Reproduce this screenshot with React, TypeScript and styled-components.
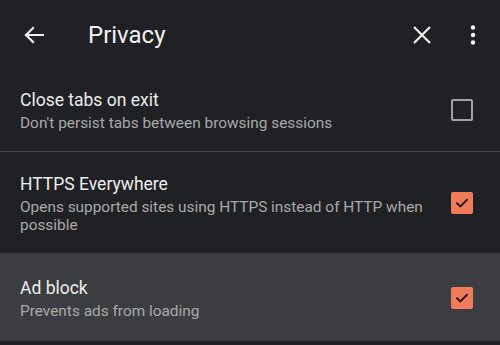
import React from "react";
import styled, { createGlobalStyle } from "styled-components";

const Global = createGlobalStyle`
  html, body { margin: 0; padding: 0; background: #202124; }
  body { font-family: Roboto, "Noto Sans", sans-serif; }
`;

const Screen = styled.div`
  width: 500px;
  height: 345px;
  background: #202124;
  display: flex;
  flex-direction: column;
  overflow: hidden;
`;

const Toolbar = styled.header`
  height: 70px;
  display: flex;
  align-items: center;
  padding: 0 15px 0 22px;
  color: #f1f1f1;
`;

const IconButton = styled.button`
  background: none;
  border: 0;
  padding: 0;
  width: 24px;
  height: 24px;
  display: flex;
  align-items: center;
  justify-content: center;
  color: #f1f1f1;
`;

const Title = styled.h1`
  margin: 0 0 0 42px;
  flex: 1;
  font-size: 24px;
  font-weight: 400;
  color: #f1f1f1;
`;

const Actions = styled.div`
  display: flex;
  align-items: center;
  gap: 27px;
`;

const Row = styled.div<{ $highlight?: boolean; $top: number; $bottom: number; $divider?: boolean }>`
  display: flex;
  align-items: center;
  gap: 20px;
  padding: ${(p) => p.$top}px 27px ${(p) => p.$bottom}px 20px;
  background: ${(p) => (p.$highlight ? "#3c3d41" : "transparent")};
  border-bottom: ${(p) => (p.$divider ? "1px solid #46474a" : "none")};
`;

const Texts = styled.div`
  flex: 1;
  display: flex;
  flex-direction: column;
`;

const RowTitle = styled.div`
  font-size: 17.5px;
  line-height: 24px;
  margin-bottom: 2px;
  color: #ededed;
`;

const RowSub = styled.div`
  font-size: 15.4px;
  line-height: 18px;
  color: #a9a9ab;
`;

const Box = styled.div<{ $checked?: boolean }>`
  width: 22px;
  height: 22px;
  box-sizing: border-box;
  border-radius: 2px;
  border: ${(p) => (p.$checked ? "none" : "2px solid #a3a3a5")};
  background: ${(p) => (p.$checked ? "#f27b5b" : "transparent")};
  display: flex;
  align-items: center;
  justify-content: center;
  flex-shrink: 0;
`;

const Check = () => (
  <svg width="16" height="16" viewBox="0 0 16 16">
    <path d="M3 8.2 L6.4 11.4 L13 4.8" fill="none" stroke="#2b1a16" strokeWidth="2" strokeLinecap="round" strokeLinejoin="round" />
  </svg>
);

const Setting = ({
  title,
  sub,
  checked,
  top,
  bottom,
  highlight,
  divider,
}: {
  title: string;
  sub: string;
  checked?: boolean;
  top: number;
  bottom: number;
  highlight?: boolean;
  divider?: boolean;
}) => (
  <Row $top={top} $bottom={bottom} $highlight={highlight} $divider={divider}>
    <Texts>
      <RowTitle>{title}</RowTitle>
      <RowSub>{sub}</RowSub>
    </Texts>
    <Box $checked={checked}>{checked && <Check />}</Box>
  </Row>
);

export default function App() {
  return (
    <Screen>
      <Global />
      <Toolbar>
        <IconButton aria-label="Back">
          <svg width="24" height="24" viewBox="0 0 24 24">
            <path d="M21 12 H4 M11 5 L4 12 L11 19" fill="none" stroke="#f1f1f1" strokeWidth="2.2" strokeLinecap="square" />
          </svg>
        </IconButton>
        <Title>Privacy</Title>
        <Actions>
          <IconButton aria-label="Close">
            <svg width="24" height="24" viewBox="0 0 24 24">
              <path d="M4 4 L20 20 M20 4 L4 20" fill="none" stroke="#f1f1f1" strokeWidth="2.2" />
            </svg>
          </IconButton>
          <IconButton aria-label="More">
            <svg width="24" height="24" viewBox="0 0 24 24">
              <circle cx="12" cy="4.5" r="2.2" fill="#f1f1f1" />
              <circle cx="12" cy="12" r="2.2" fill="#f1f1f1" />
              <circle cx="12" cy="19.5" r="2.2" fill="#f1f1f1" />
            </svg>
          </IconButton>
        </Actions>
      </Toolbar>
      <Setting
        title="Close tabs on exit"
        sub="Don't persist tabs between browsing sessions"
        top={18}
        bottom={19}
        divider
      />
      <Setting
        title="HTTPS Everywhere"
        sub="Opens supported sites using HTTPS instead of HTTP when possible"
        checked
        top={20}
        bottom={19}
      />
      <Setting
        title="Ad block"
        sub="Prevents ads from loading"
        checked
        top={23}
        bottom={21}
        highlight
      />
    </Screen>
  );
}
